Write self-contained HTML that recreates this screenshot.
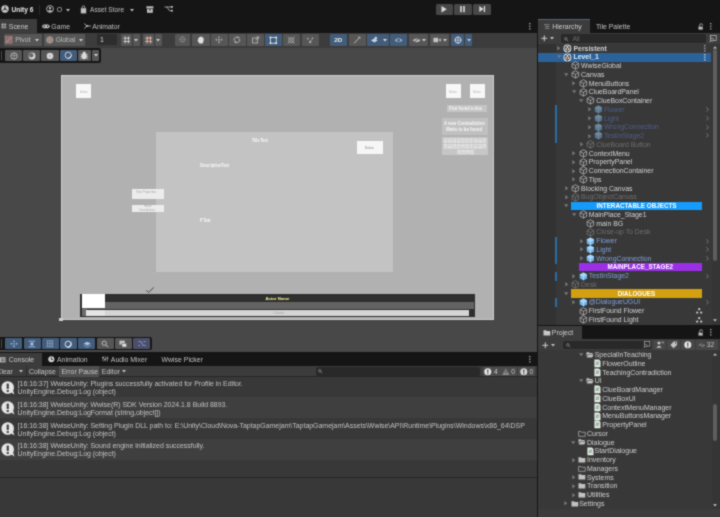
<!DOCTYPE html>
<html><head><meta charset="utf-8"><title>Unity</title>
<style>
html,body{margin:0;padding:0;}
body{width:720px;height:517px;overflow:hidden;background:#383838;position:relative;font-family:"Liberation Sans",sans-serif;}
#root{position:absolute;left:0;top:0;width:720px;height:517px;overflow:hidden;filter:url(#bl);will-change:transform;}
#root div{position:absolute;box-sizing:border-box;}
.t{position:absolute;white-space:nowrap;line-height:10px;height:10px;font-size:6.9px;}
svg{position:absolute;overflow:visible;}
</style></head><body>
<svg width="0" height="0" style="position:absolute"><filter id="bl" x="0" y="0" width="100%" height="100%" color-interpolation-filters="sRGB"><feConvolveMatrix order="3" kernelMatrix="1 2 1 2 10 2 1 2 1" divisor="22" edgeMode="duplicate" preserveAlpha="true"/></filter></svg>
<div id="root">
<div style="left:0px;top:0px;width:720px;height:19.5px;background:#151515;"></div>
<svg style="left:0.5px;top:5px;" width="8" height="8" viewBox="0 0 8 8"><circle cx="4" cy="4" r="3.7" fill="#c9c9c9"/><path d="M4 4 L4 1.1 M4 4 L1.5 5.5 M4 4 L6.5 5.5" stroke="#333" stroke-width="0.9" fill="none"/><circle cx="4" cy="4" r="1" fill="#333"/></svg>
<span class="t" style="left:11.5px;top:4.8px;color:#e6e6e6;font-size:6.6px;font-weight:700;">Unity 6</span>
<div style="left:39.2px;top:4.5px;width:0.7px;height:10.5px;background:#2a2a2a;"></div>
<svg style="left:46px;top:5px;" width="8" height="8" viewBox="0 0 8 8"><circle cx="4" cy="4" r="3.4" fill="none" stroke="#c0c0c0" stroke-width="0.9"/><circle cx="4" cy="3.1" r="1.2" fill="#c0c0c0"/><path d="M1.6 6.2 Q4 3.9 6.4 6.2 Q4 7.8 1.6 6.2Z" fill="#c0c0c0"/></svg>
<span class="t" style="left:56.8px;top:4.8px;color:#c0c0c0;font-size:6.9px;">O</span>
<svg style="left:65.5px;top:8.7px;" width="4" height="2.6" viewBox="0 0 4 2.6"><path d="M0 0 L4 0 L2 2.6 Z" fill="#c0c0c0"/></svg>
<svg style="left:79.5px;top:4.6px;" width="7" height="9" viewBox="0 0 7 9"><path d="M0.8 3.2 H6.2 V8.4 H0.8 Z" fill="#c0c0c0"/><path d="M2.2 3.2 V2.2 A1.3 1.3 0 0 1 4.8 2.2 V3.2" fill="none" stroke="#c0c0c0" stroke-width="0.8"/></svg>
<span class="t" style="left:90px;top:4.8px;color:#c0c0c0;font-size:6.6px;">Asset Store</span>
<svg style="left:129.5px;top:8.7px;" width="4" height="2.6" viewBox="0 0 4 2.6"><path d="M0 0 L4 0 L2 2.6 Z" fill="#c0c0c0"/></svg>
<svg style="left:145.5px;top:5.6px;" width="8" height="8" viewBox="0 0 8 8"><rect x="0.4" y="0.3" width="7" height="2" fill="#c0c0c0"/><path d="M1 2.8 H6.8 V6.8 H1 Z" fill="#c0c0c0"/><rect x="2.8" y="3.4" width="2.2" height="0.9" fill="#191919"/></svg>
<svg style="left:163.5px;top:5.2px;" width="9" height="8" viewBox="0 0 9 8"><g fill="none" stroke="#c0c0c0" stroke-width="0.8"><path d="M0.5 2 H3 L5.4 5.6 H8 M3 2 H8"/></g><rect x="7" y="1" width="1.8" height="1.8" fill="#c0c0c0"/><rect x="7" y="4.8" width="1.8" height="1.8" fill="#c0c0c0"/></svg>
<div style="left:435.5px;top:3.6px;width:17.5px;height:11.6px;background:#474747;border-radius:1.5px;"></div>
<div style="left:454px;top:3.6px;width:17.7px;height:11.6px;background:#474747;border-radius:1.5px;"></div>
<div style="left:473px;top:3.6px;width:17.5px;height:11.6px;background:#474747;border-radius:1.5px;"></div>
<svg style="left:441.3px;top:6.1px;" width="6.6" height="6.6" viewBox="0 0 6.6 6.6"><path d="M0.5 0 L5.8 3.3 L0.5 6.6 Z" fill="#dcdcdc"/></svg>
<svg style="left:460.4px;top:6.3px;" width="5" height="6.4" viewBox="0 0 5 6.4"><rect x="0.2" y="0" width="1.6" height="6.2" fill="#dcdcdc"/><rect x="3.2" y="0" width="1.6" height="6.2" fill="#dcdcdc"/></svg>
<svg style="left:478.8px;top:6.3px;" width="7" height="6.4" viewBox="0 0 7 6.4"><path d="M0.3 0.1 L4.6 3.1 L0.3 6.1 Z" fill="#dcdcdc"/><rect x="4.8" y="0.1" width="1.3" height="6" fill="#dcdcdc"/></svg>
<div style="left:0px;top:19.5px;width:537px;height:13px;background:#151515;"></div>
<div style="left:0px;top:19px;width:37px;height:13.7px;background:#3c3c3c;"></div>
<svg style="left:0.5px;top:23px;" width="6" height="6" viewBox="0 0 6 6"><path d="M0 1.7 H5.5 M0 4.1 H5.5 M1.6 0 V5.8 M4 0 V5.8" stroke="#b8b8b8" stroke-width="0.8" fill="none"/></svg>
<span class="t" style="left:8.8px;top:22px;color:#cfcfcf;font-size:6.9px;">Scene</span>
<svg style="left:41.5px;top:23.8px;" width="8" height="5" viewBox="0 0 8 5"><rect x="0.2" y="0.4" width="7.4" height="3.8" rx="1.9" fill="#c6c6c6"/><circle cx="2.2" cy="2.3" r="0.8" fill="#191919"/><circle cx="5.6" cy="2.3" r="0.8" fill="#191919"/></svg>
<span class="t" style="left:51.3px;top:22px;color:#c0c0c0;font-size:6.9px;">Game</span>
<svg style="left:83.8px;top:23.3px;" width="7" height="6" viewBox="0 0 7 6"><path d="M0.3 0.6 L3 3 L0.3 5.4 M3 3 H6.8" stroke="#c0c0c0" stroke-width="0.9" fill="none"/><circle cx="3" cy="3" r="0.9" fill="#c0c0c0"/></svg>
<span class="t" style="left:92.3px;top:22px;color:#c0c0c0;font-size:6.9px;">Animator</span>
<svg style="left:528.8px;top:22.9px;" width="1.6" height="6.6" viewBox="0 0 1.6 6.6"><g fill="#c4c4c4"><rect x="0.2" y="0" width="1.2" height="1.3"/><rect x="0.2" y="2.6" width="1.2" height="1.3"/><rect x="0.2" y="5.2" width="1.2" height="1.3"/></g></svg>
<div style="left:0px;top:32.5px;width:537px;height:15.2px;background:#3c3c3c;"></div>
<div style="left:4.2px;top:34.2px;width:37.4px;height:11.4px;background:#565656;border-radius:1px;"></div>
<div style="left:43.6px;top:34.2px;width:41.4px;height:11.4px;background:#565656;border-radius:1px;"></div>
<div style="left:97.4px;top:34.4px;width:19.4px;height:11px;background:#2d2d2d;border-radius:1px;"></div>
<div style="left:120.5px;top:34.2px;width:11.7px;height:11.4px;background:#565656;border-radius:1px;"></div>
<div style="left:133.2px;top:34.2px;width:6.8px;height:11.4px;background:#565656;border-radius:1px;"></div>
<div style="left:142.5px;top:34.2px;width:11.5px;height:11.4px;background:#565656;border-radius:1px;"></div>
<div style="left:155px;top:34.2px;width:7px;height:11.4px;background:#565656;border-radius:1px;"></div>
<div style="left:175px;top:34.2px;width:15px;height:11.4px;background:#565656;border-radius:1px;"></div>
<div style="left:192.3px;top:34.2px;width:17.7px;height:11.4px;background:#565656;border-radius:1px;"></div>
<div style="left:210.6px;top:34.2px;width:17.0px;height:11.4px;background:#565656;border-radius:1px;"></div>
<div style="left:228.7px;top:34.2px;width:16.9px;height:11.4px;background:#565656;border-radius:1px;"></div>
<div style="left:247px;top:34.2px;width:16.8px;height:11.4px;background:#565656;border-radius:1px;"></div>
<div style="left:265px;top:34.2px;width:17px;height:11.4px;background:#435c7a;border-radius:1px;"></div>
<div style="left:283.2px;top:34.2px;width:16.8px;height:11.4px;background:#565656;border-radius:1px;"></div>
<div style="left:301.7px;top:34.2px;width:17.1px;height:11.4px;background:#565656;border-radius:1px;"></div>
<div style="left:330px;top:34.2px;width:17.2px;height:11.4px;background:#435c7a;border-radius:1px;"></div>
<div style="left:348.8px;top:34.2px;width:16.8px;height:11.4px;background:#565656;border-radius:1px;"></div>
<div style="left:367.4px;top:34.2px;width:13.2px;height:11.4px;background:#435c7a;border-radius:1px;"></div>
<div style="left:381.2px;top:34.2px;width:7.4px;height:11.4px;background:#435c7a;border-radius:1px;"></div>
<div style="left:389.6px;top:34.2px;width:17.4px;height:11.4px;background:#435c7a;border-radius:1px;"></div>
<div style="left:408.8px;top:34.2px;width:19.2px;height:11.4px;background:#565656;border-radius:1px;"></div>
<div style="left:430px;top:34.2px;width:19.2px;height:11.4px;background:#565656;border-radius:1px;"></div>
<div style="left:451px;top:34.2px;width:13.4px;height:11.4px;background:#435c7a;border-radius:1px;"></div>
<div style="left:465px;top:34.2px;width:7px;height:11.4px;background:#435c7a;border-radius:1px;"></div>
<svg style="left:4.5px;top:35.6px;" width="8" height="8" viewBox="0 0 8 8"><rect x="0.5" y="0.5" width="6.6" height="6.6" fill="#8a6f6f" stroke="#b88" stroke-width="0.5"/><path d="M1 6.6 L6.6 1" stroke="#d99" stroke-width="0.8"/></svg>
<span class="t" style="left:15.2px;top:35px;color:#bdbdbd;font-size:6.9px;">Pivot</span>
<svg style="left:35px;top:39.0px;" width="4" height="2.6" viewBox="0 0 4 2.6"><path d="M0 0 L4 0 L2 2.6 Z" fill="#d0d0d0"/></svg>
<svg style="left:46px;top:35.8px;" width="8" height="8" viewBox="0 0 8 8"><circle cx="3.8" cy="3.9" r="3.2" fill="#8d7a72" stroke="#c9b8b0" stroke-width="0.6"/><path d="M0.8 3.9 H6.8 M3.8 0.8 V7" stroke="#c9b8b0" stroke-width="0.5"/></svg>
<span class="t" style="left:55.4px;top:35px;color:#bdbdbd;font-size:6.9px;">Global</span>
<svg style="left:78.6px;top:39.0px;" width="4" height="2.6" viewBox="0 0 4 2.6"><path d="M0 0 L4 0 L2 2.6 Z" fill="#d0d0d0"/></svg>
<span class="t" style="left:100px;top:35px;color:#d6d6d6;font-size:6.9px;">1</span>
<svg style="left:123.2px;top:36px;" width="8" height="8" viewBox="0 0 8 8"><path d="M0.3 2.2 H7.2 M0.3 5.4 H7.2 M2.2 0.3 V7.4 M5.4 0.3 V7.4" stroke="#e4e4e4" stroke-width="0.8" fill="none"/></svg>
<svg style="left:134px;top:39.0px;" width="4" height="2.6" viewBox="0 0 4 2.6"><path d="M0 0 L4 0 L2 2.6 Z" fill="#d0d0d0"/></svg>
<svg style="left:145.2px;top:36px;" width="8" height="8" viewBox="0 0 8 8"><path d="M0.3 2.2 H7.2 M0.3 5.4 H7.2 M2.2 0.3 V7.4 M5.4 0.3 V7.4" stroke="#e4e4e4" stroke-width="0.8" fill="none"/><path d="M2.2 2.2 H5.4 V5.4 H2.2Z" stroke="#e58a6a" stroke-width="0.9" fill="none"/></svg>
<svg style="left:156px;top:39.0px;" width="4" height="2.6" viewBox="0 0 4 2.6"><path d="M0 0 L4 0 L2 2.6 Z" fill="#d0d0d0"/></svg>
<svg style="left:178.5px;top:36.4px;" width="7" height="7" viewBox="0 0 7 7"><circle cx="3.4" cy="3.4" r="2.6" fill="none" stroke="#8c8c8c" stroke-width="0.8"/><path d="M3.4 0 V6.8 M0 3.4 H6.8" stroke="#8c8c8c" stroke-width="0.5"/></svg>
<svg style="left:197.3px;top:35.9px;" width="8" height="8" viewBox="0 0 8 8"><path d="M1.2 4 V2 H2.2 V1 H3.3 V0.6 H4.4 V1 H5.5 V1.8 H6.6 V5 L5.6 7.4 H2.4 L0.4 4.6 Z" fill="#e0e0e0"/></svg>
<svg style="left:215px;top:36.2px;" width="8" height="8" viewBox="0 0 8 8"><path d="M4 0.2 L5.2 1.8 H2.8 Z M4 7.4 L5.2 5.8 H2.8 Z M0.3 3.8 L1.9 2.6 V5 Z M7.7 3.8 L6.1 2.6 V5 Z" fill="#bdbdbd"/><rect x="3.2" y="3" width="1.6" height="1.6" fill="#bdbdbd"/></svg>
<svg style="left:233.3px;top:36.1px;" width="8" height="8" viewBox="0 0 8 8"><path d="M1.2 4.6 A2.8 2.8 0 0 1 5.6 1.6 M6.6 3 A2.8 2.8 0 0 1 2.2 6" fill="none" stroke="#bdbdbd" stroke-width="0.9"/><path d="M4.8 0.4 L6.8 1.8 L4.8 2.8Z M3 7.2 L1 5.8 L3 4.8Z" fill="#bdbdbd"/></svg>
<svg style="left:251.6px;top:36.2px;" width="8" height="8" viewBox="0 0 8 8"><rect x="0.6" y="2" width="5" height="5" fill="none" stroke="#bdbdbd" stroke-width="0.8"/><path d="M3.2 4.4 L6.6 1 M4.6 0.8 H6.8 V3" stroke="#bdbdbd" stroke-width="0.8" fill="none"/></svg>
<svg style="left:269.3px;top:35.7px;" width="9" height="9" viewBox="0 0 9 9"><rect x="1.4" y="1.4" width="5.8" height="5.8" fill="none" stroke="#e8eef6" stroke-width="0.8"/><g fill="#f4f8ff"><circle cx="1.4" cy="1.4" r="0.9"/><circle cx="7.2" cy="1.4" r="0.9"/><circle cx="1.4" cy="7.2" r="0.9"/><circle cx="7.2" cy="7.2" r="0.9"/></g></svg>
<svg style="left:287.4px;top:35.9px;" width="9" height="9" viewBox="0 0 9 9"><circle cx="4.2" cy="4.2" r="2.5" fill="none" stroke="#bdbdbd" stroke-width="0.7"/><path d="M0.6 7.6 L7.8 0.6 M0.8 0.8 L7.6 7.6" stroke="#bdbdbd" stroke-width="0.6"/></svg>
<svg style="left:306px;top:36px;" width="9" height="9" viewBox="0 0 9 9"><path d="M1 1.4 L3.2 3 L1.4 3.6Z M6.4 1 L7.4 3.2 L5.4 3Z" fill="#bdbdbd"/><path d="M3.4 4.6 L5.8 6 L3.4 7.6Z" fill="#bdbdbd"/><path d="M5 3.6 V5" stroke="#bdbdbd" stroke-width="0.7"/></svg>
<span class="t" style="left:334.2px;top:35px;color:#e8eef6;font-size:6.2px;font-weight:700;">2D</span>
<svg style="left:352.6px;top:36px;" width="9" height="9" viewBox="0 0 9 9"><path d="M1 7.4 L6.6 1.4" stroke="#bdbdbd" stroke-width="1"/><path d="M5.4 0.6 L7.6 2.4" stroke="#bdbdbd" stroke-width="1.2"/></svg>
<svg style="left:369.6px;top:36.2px;" width="9" height="8" viewBox="0 0 9 8"><path d="M1 4.2 L4.4 2.6 L7.8 4.2 L4.4 6.6 Z" fill="#c9d8ea"/><circle cx="5.8" cy="2" r="1.3" fill="#c9d8ea"/></svg>
<svg style="left:383px;top:39.0px;" width="4" height="2.6" viewBox="0 0 4 2.6"><path d="M0 0 L4 0 L2 2.6 Z" fill="#d4e0ee"/></svg>
<svg style="left:393.6px;top:36.6px;" width="10" height="7" viewBox="0 0 10 7"><path d="M0.6 3.3 Q4.6 -0.8 8.6 3.3 Q4.6 7.4 0.6 3.3Z" fill="#9fb6d0"/><circle cx="4.6" cy="3.3" r="1.5" fill="#46607c"/></svg>
<svg style="left:412px;top:36.6px;" width="10" height="7" viewBox="0 0 10 7"><path d="M0.6 3.3 Q4.6 -0.4 8.6 3.3 Q4.6 7 0.6 3.3Z" fill="#bdbdbd"/><path d="M1 5.8 L8 0.6" stroke="#585858" stroke-width="0.9"/></svg>
<svg style="left:422.2px;top:39.0px;" width="4" height="2.6" viewBox="0 0 4 2.6"><path d="M0 0 L4 0 L2 2.6 Z" fill="#d0d0d0"/></svg>
<svg style="left:433px;top:36.9px;" width="9" height="7" viewBox="0 0 9 7"><rect x="0.4" y="0.8" width="4.8" height="4.4" fill="#c4c4c4"/><path d="M5.6 3 L7.8 1.2 V4.8 Z" fill="#c4c4c4"/></svg>
<svg style="left:443px;top:39.0px;" width="4" height="2.6" viewBox="0 0 4 2.6"><path d="M0 0 L4 0 L2 2.6 Z" fill="#d0d0d0"/></svg>
<svg style="left:453.7px;top:35.8px;" width="9" height="9" viewBox="0 0 9 9"><circle cx="4" cy="4.1" r="3" fill="none" stroke="#e8eef6" stroke-width="0.8"/><path d="M4 0.2 V8 M0.2 4.1 H7.8" stroke="#e8eef6" stroke-width="0.6"/></svg>
<svg style="left:466.6px;top:39.0px;" width="4" height="2.6" viewBox="0 0 4 2.6"><path d="M0 0 L4 0 L2 2.6 Z" fill="#b8d0ee"/></svg>
<div style="left:0px;top:47.7px;width:537px;height:305px;background:#484848;"></div>
<div style="left:60.6px;top:74.8px;width:433.8px;height:244.8px;background:#b1b1b1;border:0.8px solid #cdcdcd;"></div>
<div style="left:155.6px;top:132px;width:237.8px;height:140px;background:#c3c3c3;"></div>
<div style="left:75.8px;top:84px;width:15.2px;height:14.2px;background:#f8f8f8;"></div>
<div style="left:445.5px;top:84px;width:15.2px;height:14.2px;background:#f8f8f8;"></div>
<div style="left:469.5px;top:84px;width:15.2px;height:14.2px;background:#f8f8f8;"></div>
<span class="t" style="left:79.6px;top:86.6px;color:#b4b4b4;font-size:3.4px;transform:scaleX(0.8);transform-origin:0 50%;">Button</span>
<span class="t" style="left:449.4px;top:86.6px;color:#b4b4b4;font-size:3.4px;transform:scaleX(0.8);transform-origin:0 50%;">Button</span>
<span class="t" style="left:473.4px;top:86.6px;color:#b4b4b4;font-size:3.4px;transform:scaleX(0.8);transform-origin:0 50%;">Button</span>
<div style="left:356.6px;top:141px;width:26px;height:12.8px;background:#f6f6f6;"></div>
<span class="t" style="left:365px;top:142.6px;color:#8a8a8a;font-size:3.6px;transform:scaleX(0.85);transform-origin:0 50%;">Button</span>
<div style="left:447.2px;top:104.6px;width:39.8px;height:7px;background:#c4c4c4;"></div>
<span class="t" style="left:449px;top:103px;color:#f4f4f4;font-size:5.2px;font-weight:700;transform:scaleX(0.76);transform-origin:0 50%;">First found a clue</span>
<div style="left:442.2px;top:117.8px;width:45.4px;height:16.8px;background:#c0c0c0;"></div>
<span class="t" style="left:443.6px;top:117.6px;color:#f6f6f6;font-size:5.4px;font-weight:700;transform:scaleX(0.78);transform-origin:0 50%;">A new Contradiction</span>
<span class="t" style="left:446.4px;top:124px;color:#f6f6f6;font-size:5.4px;font-weight:700;transform:scaleX(0.8);transform-origin:0 50%;">Waits to be found</span>
<div style="left:442.2px;top:137.2px;width:45.4px;height:18px;background:#c6c6c6;"></div>
<svg style="left:0px;top:0px;" width="720" height="517" viewBox="0 0 720 517"><rect x="443.8" y="138.5" width="3.6" height="4.3" fill="#e6e6e6"/><rect x="444.2" y="140.18" width="2.8" height="0.55" fill="#c6c6c6" opacity="0.75"/><rect x="444.2" y="139.76" width="2.8" height="0.55" fill="#c6c6c6" opacity="0.75"/><rect x="445.77" y="139.0" width="0.5" height="3.3" fill="#c6c6c6" opacity="0.6"/><rect x="448.1" y="138.5" width="3.6" height="4.3" fill="#e6e6e6"/><rect x="448.5" y="139.57" width="2.8" height="0.55" fill="#c6c6c6" opacity="0.75"/><rect x="448.5" y="140.69" width="2.8" height="0.55" fill="#c6c6c6" opacity="0.75"/><rect x="449.56" y="139.0" width="0.5" height="3.3" fill="#c6c6c6" opacity="0.6"/><rect x="452.4" y="138.5" width="3.6" height="4.3" fill="#e6e6e6"/><rect x="452.8" y="139.54" width="2.8" height="0.55" fill="#c6c6c6" opacity="0.75"/><rect x="452.8" y="140.62" width="2.8" height="0.55" fill="#c6c6c6" opacity="0.75"/><rect x="453.27" y="139.0" width="0.5" height="3.3" fill="#c6c6c6" opacity="0.6"/><rect x="456.7" y="138.5" width="3.6" height="4.3" fill="#e6e6e6"/><rect x="457.1" y="140.44" width="2.8" height="0.55" fill="#c6c6c6" opacity="0.75"/><rect x="457.1" y="139.57" width="2.8" height="0.55" fill="#c6c6c6" opacity="0.75"/><rect x="457.66" y="139.0" width="0.5" height="3.3" fill="#c6c6c6" opacity="0.6"/><rect x="461.0" y="138.5" width="3.6" height="4.3" fill="#e6e6e6"/><rect x="461.4" y="140.42" width="2.8" height="0.55" fill="#c6c6c6" opacity="0.75"/><rect x="461.4" y="141.38" width="2.8" height="0.55" fill="#c6c6c6" opacity="0.75"/><rect x="462.02" y="139.0" width="0.5" height="3.3" fill="#c6c6c6" opacity="0.6"/><rect x="465.3" y="138.5" width="3.6" height="4.3" fill="#e6e6e6"/><rect x="465.7" y="139.94" width="2.8" height="0.55" fill="#c6c6c6" opacity="0.75"/><rect x="465.7" y="140.91" width="2.8" height="0.55" fill="#c6c6c6" opacity="0.75"/><rect x="467.81" y="139.0" width="0.5" height="3.3" fill="#c6c6c6" opacity="0.6"/><rect x="469.6" y="138.5" width="3.6" height="4.3" fill="#e6e6e6"/><rect x="470.0" y="140.79" width="2.8" height="0.55" fill="#c6c6c6" opacity="0.75"/><rect x="470.0" y="140.35" width="2.8" height="0.55" fill="#c6c6c6" opacity="0.75"/><rect x="472.16" y="139.0" width="0.5" height="3.3" fill="#c6c6c6" opacity="0.6"/><rect x="473.9" y="138.5" width="3.6" height="4.3" fill="#e6e6e6"/><rect x="474.3" y="139.51" width="2.8" height="0.55" fill="#c6c6c6" opacity="0.75"/><rect x="474.3" y="141.46" width="2.8" height="0.55" fill="#c6c6c6" opacity="0.75"/><rect x="475.22" y="139.0" width="0.5" height="3.3" fill="#c6c6c6" opacity="0.6"/><rect x="478.2" y="138.5" width="3.6" height="4.3" fill="#e6e6e6"/><rect x="478.6" y="139.75" width="2.8" height="0.55" fill="#c6c6c6" opacity="0.75"/><rect x="478.6" y="139.68" width="2.8" height="0.55" fill="#c6c6c6" opacity="0.75"/><rect x="479.56" y="139.0" width="0.5" height="3.3" fill="#c6c6c6" opacity="0.6"/><rect x="482.5" y="138.5" width="3.6" height="4.3" fill="#e6e6e6"/><rect x="482.9" y="141.36" width="2.8" height="0.55" fill="#c6c6c6" opacity="0.75"/><rect x="482.9" y="139.83" width="2.8" height="0.55" fill="#c6c6c6" opacity="0.75"/><rect x="484.35" y="139.0" width="0.5" height="3.3" fill="#c6c6c6" opacity="0.6"/><rect x="443.8" y="144.2" width="3.6" height="4.3" fill="#e6e6e6"/><rect x="444.2" y="146.63" width="2.8" height="0.55" fill="#c6c6c6" opacity="0.75"/><rect x="444.2" y="145.99" width="2.8" height="0.55" fill="#c6c6c6" opacity="0.75"/><rect x="445.59" y="144.7" width="0.5" height="3.3" fill="#c6c6c6" opacity="0.6"/><rect x="448.1" y="144.2" width="3.6" height="4.3" fill="#e6e6e6"/><rect x="448.5" y="145.25" width="2.8" height="0.55" fill="#c6c6c6" opacity="0.75"/><rect x="448.5" y="145.24" width="2.8" height="0.55" fill="#c6c6c6" opacity="0.75"/><rect x="449.27" y="144.7" width="0.5" height="3.3" fill="#c6c6c6" opacity="0.6"/><rect x="452.4" y="144.2" width="3.6" height="4.3" fill="#e6e6e6"/><rect x="452.8" y="146.73" width="2.8" height="0.55" fill="#c6c6c6" opacity="0.75"/><rect x="452.8" y="146.13" width="2.8" height="0.55" fill="#c6c6c6" opacity="0.75"/><rect x="453.77" y="144.7" width="0.5" height="3.3" fill="#c6c6c6" opacity="0.6"/><rect x="456.7" y="144.2" width="3.6" height="4.3" fill="#e6e6e6"/><rect x="457.1" y="146.51" width="2.8" height="0.55" fill="#c6c6c6" opacity="0.75"/><rect x="457.1" y="146.19" width="2.8" height="0.55" fill="#c6c6c6" opacity="0.75"/><rect x="458.04" y="144.7" width="0.5" height="3.3" fill="#c6c6c6" opacity="0.6"/><rect x="461.0" y="144.2" width="3.6" height="4.3" fill="#e6e6e6"/><rect x="461.4" y="147.01" width="2.8" height="0.55" fill="#c6c6c6" opacity="0.75"/><rect x="461.4" y="146.78" width="2.8" height="0.55" fill="#c6c6c6" opacity="0.75"/><rect x="462.24" y="144.7" width="0.5" height="3.3" fill="#c6c6c6" opacity="0.6"/><rect x="465.3" y="144.2" width="3.6" height="4.3" fill="#e6e6e6"/><rect x="465.7" y="146.48" width="2.8" height="0.55" fill="#c6c6c6" opacity="0.75"/><rect x="465.7" y="146.36" width="2.8" height="0.55" fill="#c6c6c6" opacity="0.75"/><rect x="467.68" y="144.7" width="0.5" height="3.3" fill="#c6c6c6" opacity="0.6"/><rect x="469.6" y="144.2" width="3.6" height="4.3" fill="#e6e6e6"/><rect x="470.0" y="146.85" width="2.8" height="0.55" fill="#c6c6c6" opacity="0.75"/><rect x="470.0" y="145.79" width="2.8" height="0.55" fill="#c6c6c6" opacity="0.75"/><rect x="472.16" y="144.7" width="0.5" height="3.3" fill="#c6c6c6" opacity="0.6"/><rect x="473.9" y="144.2" width="3.6" height="4.3" fill="#e6e6e6"/><rect x="474.3" y="145.38" width="2.8" height="0.55" fill="#c6c6c6" opacity="0.75"/><rect x="474.3" y="146.1" width="2.8" height="0.55" fill="#c6c6c6" opacity="0.75"/><rect x="476.06" y="144.7" width="0.5" height="3.3" fill="#c6c6c6" opacity="0.6"/><rect x="478.2" y="144.2" width="3.6" height="4.3" fill="#e6e6e6"/><rect x="478.6" y="145.46" width="2.8" height="0.55" fill="#c6c6c6" opacity="0.75"/><rect x="478.6" y="146.27" width="2.8" height="0.55" fill="#c6c6c6" opacity="0.75"/><rect x="479.07" y="144.7" width="0.5" height="3.3" fill="#c6c6c6" opacity="0.6"/><rect x="482.5" y="144.2" width="3.6" height="4.3" fill="#e6e6e6"/><rect x="482.9" y="146.7" width="2.8" height="0.55" fill="#c6c6c6" opacity="0.75"/><rect x="482.9" y="146.93" width="2.8" height="0.55" fill="#c6c6c6" opacity="0.75"/><rect x="484.33" y="144.7" width="0.5" height="3.3" fill="#c6c6c6" opacity="0.6"/><rect x="457.4" y="149.9" width="3.6" height="4.3" fill="#e6e6e6"/><rect x="457.8" y="152.9" width="2.8" height="0.55" fill="#c6c6c6" opacity="0.75"/><rect x="457.8" y="151.55" width="2.8" height="0.55" fill="#c6c6c6" opacity="0.75"/><rect x="459.45" y="150.4" width="0.5" height="3.3" fill="#c6c6c6" opacity="0.6"/><rect x="461.7" y="149.9" width="3.6" height="4.3" fill="#e6e6e6"/><rect x="462.1" y="152.23" width="2.8" height="0.55" fill="#c6c6c6" opacity="0.75"/><rect x="462.1" y="152.19" width="2.8" height="0.55" fill="#c6c6c6" opacity="0.75"/><rect x="463.32" y="150.4" width="0.5" height="3.3" fill="#c6c6c6" opacity="0.6"/><rect x="466.0" y="149.9" width="3.6" height="4.3" fill="#e6e6e6"/><rect x="466.4" y="152.82" width="2.8" height="0.55" fill="#c6c6c6" opacity="0.75"/><rect x="466.4" y="153.07" width="2.8" height="0.55" fill="#c6c6c6" opacity="0.75"/><rect x="467.65" y="150.4" width="0.5" height="3.3" fill="#c6c6c6" opacity="0.6"/><rect x="470.3" y="149.9" width="3.6" height="4.3" fill="#e6e6e6"/><rect x="470.7" y="152.39" width="2.8" height="0.55" fill="#c6c6c6" opacity="0.75"/><rect x="470.7" y="150.95" width="2.8" height="0.55" fill="#c6c6c6" opacity="0.75"/><rect x="472.36" y="150.4" width="0.5" height="3.3" fill="#c6c6c6" opacity="0.6"/></svg>
<span class="t" style="left:251.8px;top:134.6px;color:#f8f8f8;font-size:5.2px;font-weight:700;transform:scaleX(0.7);transform-origin:0 50%;">Title Text</span>
<span class="t" style="left:200.4px;top:159.8px;color:#f8f8f8;font-size:5.4px;font-weight:700;transform:scaleX(0.72);transform-origin:0 50%;">DescriptionText</span>
<span class="t" style="left:199.8px;top:215px;color:#f8f8f8;font-size:5.2px;font-weight:700;transform:scaleX(0.7);transform-origin:0 50%;">P Text</span>
<div style="left:132px;top:189px;width:32px;height:9.8px;background:#ececec;"></div>
<span class="t" style="left:136.4px;top:186.8px;color:#a8a8a8;font-size:3.4px;transform:scaleX(0.85);transform-origin:0 50%;">View Properties</span>
<div style="left:132px;top:204.6px;width:32px;height:7.8px;background:#ececec;"></div>
<span class="t" style="left:144px;top:201.4px;color:#a8a8a8;font-size:3px;transform:scaleX(0.85);transform-origin:0 50%;">Relate</span>
<span class="t" style="left:138.8px;top:204.6px;color:#a8a8a8;font-size:3px;transform:scaleX(0.85);transform-origin:0 50%;">Contradictions</span>
<svg style="left:146.2px;top:287.4px;" width="9" height="7" viewBox="0 0 9 7"><path d="M0.4 3.2 L2.6 5.6 L7.6 0.4" fill="none" stroke="#3c3c3c" stroke-width="0.9"/></svg>
<div style="left:80.2px;top:294.4px;width:394.8px;height:23px;background:#2e2e2e;"></div>
<div style="left:81.6px;top:295.6px;width:392px;height:6.6px;background:#2f2f2f;"></div>
<div style="left:81.6px;top:302.2px;width:392px;height:6.4px;background:#636363;"></div>
<div style="left:81.6px;top:309.4px;width:5px;height:6.6px;background:#6c6c6c;"></div>
<div style="left:86px;top:309.8px;width:383px;height:6px;background:#d4d4d4;"></div>
<div style="left:81.8px;top:293.6px;width:22.8px;height:14.2px;background:#ffffff;"></div>
<div style="left:86px;top:309.8px;width:18.6px;height:6px;background:#e4e4e4;"></div>
<span class="t" style="left:265.4px;top:294.4px;color:#f4f690;font-size:4.3px;font-weight:700;">Actor Name</span>
<span class="t" style="left:273.4px;top:307.9px;color:#a4a4a4;font-size:3.6px;">Choice</span>
<div style="left:59.4px;top:318px;width:3.6px;height:3.4px;background:#cfcfcf;"></div>
<div style="left:-2px;top:48px;width:103px;height:14.6px;background:#161616;border-radius:2px;"></div>
<div style="left:1.2px;top:50.6px;width:1px;height:9px;background:#4a4a4a;"></div>
<div style="left:5px;top:50px;width:17px;height:10.8px;background:#565656;border-radius:1px;"></div>
<div style="left:23px;top:50px;width:17px;height:10.8px;background:#565656;border-radius:1px;"></div>
<div style="left:41px;top:50px;width:17.6px;height:10.8px;background:#565656;border-radius:1px;"></div>
<div style="left:59.6px;top:50px;width:17.4px;height:10.8px;background:#435c7a;border-radius:1px;"></div>
<div style="left:78px;top:50px;width:13px;height:10.8px;background:#565656;border-radius:1px;"></div>
<div style="left:92px;top:50px;width:7.4px;height:10.8px;background:#565656;border-radius:1px;"></div>
<svg style="left:9.6px;top:51.6px;" width="8" height="8" viewBox="0 0 8 8"><circle cx="4" cy="4" r="3.2" fill="none" stroke="#c9c9c9" stroke-width="0.8"/><path d="M1.4 3 Q4 4.8 6.6 3 M4 0.8 V7.2" stroke="#c9c9c9" stroke-width="0.5" fill="none"/></svg>
<svg style="left:27.6px;top:51.6px;" width="8" height="8" viewBox="0 0 8 8"><circle cx="4" cy="4" r="3.4" fill="#dadada"/><circle cx="3.2" cy="3.2" r="2.3" fill="#6a6a6a"/></svg>
<svg style="left:45.8px;top:51.6px;" width="8" height="8" viewBox="0 0 8 8"><circle cx="4" cy="4" r="3.3" fill="#d4d4d4"/><circle cx="4" cy="4" r="1" fill="#bbb"/></svg>
<svg style="left:64.2px;top:51.4px;" width="9" height="9" viewBox="0 0 9 9"><circle cx="4.2" cy="4.2" r="3.1" fill="none" stroke="#dfe8f4" stroke-width="0.8"/><path d="M7.2 3 A3.3 3.3 0 0 1 2.2 7 A3.9 3.9 0 0 0 7.2 3Z" fill="#f4f8fd"/></svg>
<svg style="left:80.4px;top:51px;" width="9" height="10" viewBox="0 0 9 10"><ellipse cx="4.2" cy="5.2" rx="2.6" ry="3.1" fill="#dcdcdc"/><circle cx="4.2" cy="1.9" r="1.5" fill="#dcdcdc"/><path d="M0.4 3.2 L2 4.2 M0.2 5.6 H1.8 M0.4 8 L2 7 M8 3.2 L6.4 4.2 M8.2 5.6 H6.6 M8 8 L6.4 7" stroke="#dcdcdc" stroke-width="0.7"/></svg>
<svg style="left:93.8px;top:54.4px;" width="4" height="2.6" viewBox="0 0 4 2.6"><path d="M0 0 L4 0 L2 2.6 Z" fill="#d6d6d6"/></svg>
<div style="left:-2px;top:336.8px;width:153.6px;height:13.4px;background:#161616;border-radius:2px;"></div>
<div style="left:1.2px;top:339.2px;width:0.9px;height:8.6px;background:#4a4a4a;"></div>
<div style="left:5.3px;top:338.4px;width:17.2px;height:10.4px;background:#435c7a;border-radius:1px;"></div>
<div style="left:23.6px;top:338.4px;width:17.3px;height:10.4px;background:#435c7a;border-radius:1px;"></div>
<div style="left:42px;top:338.4px;width:16.9px;height:10.4px;background:#435c7a;border-radius:1px;"></div>
<div style="left:60px;top:338.4px;width:17.2px;height:10.4px;background:#435c7a;border-radius:1px;"></div>
<div style="left:78.4px;top:338.4px;width:16.8px;height:10.4px;background:#435c7a;border-radius:1px;"></div>
<div style="left:96.8px;top:338.4px;width:16.8px;height:10.4px;background:#565656;border-radius:1px;"></div>
<div style="left:114.8px;top:338.4px;width:16.8px;height:10.4px;background:#565656;border-radius:1px;"></div>
<div style="left:133px;top:338.4px;width:17px;height:10.4px;background:#4b4f69;border-radius:1px;"></div>
<svg style="left:10px;top:339.6px;" width="8" height="8" viewBox="0 0 8 8"><path d="M4 0.2 L5.2 1.8 H2.8 Z M4 7.4 L5.2 5.8 H2.8 Z M0.3 3.8 L1.9 2.6 V5 Z M7.7 3.8 L6.1 2.6 V5 Z" fill="#a9c6ea"/><rect x="3.3" y="3.1" width="1.4" height="1.4" fill="#a9c6ea"/></svg>
<svg style="left:28.2px;top:339.8px;" width="8" height="8" viewBox="0 0 8 8"><path d="M0.6 1.2 H7.2 M0.6 6.8 H7.2" stroke="#a9c6ea" stroke-width="0.8"/><rect x="2.4" y="2.6" width="3" height="2.8" fill="#a9c6ea"/></svg>
<svg style="left:46.4px;top:339.8px;" width="8" height="8" viewBox="0 0 8 8"><path d="M0.4 1 H7.4 M0.4 3.8 H7.4 M0.4 6.6 H7.4 M1.6 0.4 V7.2 M4 0.4 V7.2 M6.4 0.4 V7.2" stroke="#a9c6ea" stroke-width="0.5" fill="none"/></svg>
<svg style="left:64.3px;top:339.5px;" width="9" height="9" viewBox="0 0 9 9"><circle cx="4.2" cy="4.2" r="3.1" fill="none" stroke="#e6eef8" stroke-width="0.9"/><path d="M6.2 1.6 A3.2 3.2 0 0 1 2 6.6 A3.6 3.6 0 0 0 6.2 1.6Z" fill="#e6eef8"/></svg>
<svg style="left:82.6px;top:340px;" width="9" height="8" viewBox="0 0 9 8"><path d="M0.6 3.6 L4.2 1.8 L7.8 3.6 L4.2 5.6Z" fill="#a9c6ea"/><path d="M0.6 5.2 L4.2 7.2 L7.8 5.2" fill="none" stroke="#a9c6ea" stroke-width="0.6"/></svg>
<svg style="left:101.4px;top:339.8px;" width="8" height="8" viewBox="0 0 8 8"><circle cx="3.2" cy="3.2" r="2.2" fill="none" stroke="#c4c4c4" stroke-width="0.9"/><path d="M4.8 4.8 L7.2 7.2" stroke="#c4c4c4" stroke-width="1"/></svg>
<svg style="left:119.4px;top:339.8px;" width="9" height="8" viewBox="0 0 9 8"><rect x="0.4" y="0.6" width="5.4" height="4" fill="#c4c4c4"/><rect x="3" y="3.4" width="4.6" height="3.6" fill="#e0e0e0" stroke="#585858" stroke-width="0.5"/></svg>
<svg style="left:137.6px;top:340.2px;" width="9" height="8" viewBox="0 0 9 8"><path d="M0.4 1.6 H3 L5 5.4 H7.8 M0.4 5.4 H2.2 M5.4 1.6 H7.8" stroke="#9a9ff0" stroke-width="0.8" fill="none"/></svg>
<div style="left:0px;top:351.8px;width:537px;height:13.9px;background:#151515;"></div>
<div style="left:0px;top:352.8px;width:42.4px;height:13px;background:#3c3c3c;"></div>
<svg style="left:0.2px;top:356.6px;" width="6" height="6" viewBox="0 0 6 6"><rect x="0" y="0.2" width="5.6" height="5.2" fill="#b4b4b4"/><path d="M1 2 H4.8 M1 3.7 H4.8" stroke="#3c3c3c" stroke-width="0.7"/></svg>
<span class="t" style="left:8.8px;top:355px;color:#d0d0d0;font-size:6.9px;">Console</span>
<svg style="left:48.2px;top:355.8px;" width="7" height="7" viewBox="0 0 7 7"><circle cx="3.3" cy="3.3" r="3" fill="#d6d6d6"/><path d="M3.3 1.2 V3.5 H5" stroke="#191919" stroke-width="0.8" fill="none"/></svg>
<span class="t" style="left:57px;top:355px;color:#c0c0c0;font-size:6.9px;">Animation</span>
<svg style="left:101.6px;top:356.4px;" width="8" height="6" viewBox="0 0 8 6"><path d="M1 0.4 V5.4 M3.2 0.4 V5.4 M5.4 0.4 V5.4" stroke="#c0c0c0" stroke-width="0.6"/><rect x="0.2" y="1" width="1.6" height="1.2" fill="#c0c0c0"/><rect x="2.4" y="3" width="1.6" height="1.2" fill="#c0c0c0"/><rect x="4.6" y="1.6" width="1.6" height="1.2" fill="#c0c0c0"/></svg>
<span class="t" style="left:110.8px;top:355px;color:#c0c0c0;font-size:6.9px;">Audio Mixer</span>
<span class="t" style="left:161.6px;top:355px;color:#c0c0c0;font-size:6.9px;">Wwise Picker</span>
<svg style="left:528.8px;top:355.9px;" width="1.6" height="6.6" viewBox="0 0 1.6 6.6"><g fill="#c4c4c4"><rect x="0.2" y="0" width="1.2" height="1.3"/><rect x="0.2" y="2.6" width="1.2" height="1.3"/><rect x="0.2" y="5.2" width="1.2" height="1.3"/></g></svg>
<div style="left:0px;top:365.7px;width:537px;height:11.2px;background:#3c3c3c;border-bottom:0.6px solid #262626;"></div>
<span class="t" style="left:-3.6px;top:366.5px;color:#c4c4c4;font-size:6.9px;">Clear</span>
<svg style="left:18.8px;top:370.4px;" width="4" height="2.6" viewBox="0 0 4 2.6"><path d="M0 0 L4 0 L2 2.6 Z" fill="#c4c4c4"/></svg>
<div style="left:26.2px;top:366.2px;width:0.6px;height:10.2px;background:#2a2a2a;"></div>
<span class="t" style="left:29px;top:366.5px;color:#c4c4c4;font-size:6.9px;">Collapse</span>
<div style="left:59.4px;top:366.2px;width:39.6px;height:10.4px;background:#505050;"></div>
<span class="t" style="left:61.4px;top:366.5px;color:#c4c4c4;font-size:6.9px;">Error Pause</span>
<span class="t" style="left:101.8px;top:366.5px;color:#c4c4c4;font-size:6.9px;">Editor</span>
<svg style="left:121.6px;top:370.4px;" width="4" height="2.6" viewBox="0 0 4 2.6"><path d="M0 0 L4 0 L2 2.6 Z" fill="#c4c4c4"/></svg>
<div style="left:315.8px;top:367px;width:164.4px;height:8.8px;background:#292929;border-radius:2px;"></div>
<svg style="left:318.4px;top:369.2px;" width="5" height="5" viewBox="0 0 5 5"><circle cx="1.8" cy="1.8" r="1.2" fill="none" stroke="#aaa" stroke-width="0.6"/><path d="M2.8 2.8 L4.2 4.2" stroke="#aaa" stroke-width="0.6"/></svg>
<div style="left:482.8px;top:366.6px;width:17.2px;height:9.8px;background:#4c4c4c;"></div>
<div style="left:500.2px;top:366.6px;width:17.2px;height:9.8px;background:#4c4c4c;"></div>
<div style="left:518px;top:366.6px;width:17.2px;height:9.8px;background:#4c4c4c;"></div>
<svg style="left:484.4px;top:367.6px;" width="8" height="8" viewBox="0 0 8 8"><circle cx="3.8" cy="3.8" r="3.5" fill="#e8e8e8"/><rect x="3.2" y="1.6" width="1.2" height="3" fill="#444"/><rect x="3.2" y="5.2" width="1.2" height="1.1" fill="#444"/></svg>
<span class="t" style="left:494px;top:366.5px;color:#d0d0d0;font-size:6.6px;">4</span>
<svg style="left:502px;top:367.8px;" width="8" height="8" viewBox="0 0 8 8"><path d="M3.8 0.6 L7.4 7 H0.2 Z" fill="#8a8a8a"/><rect x="3.3" y="2.8" width="1" height="2.4" fill="#4c4c4c"/></svg>
<span class="t" style="left:511.2px;top:366.5px;color:#c4c4c4;font-size:6.6px;">0</span>
<svg style="left:520px;top:367.6px;" width="8" height="8" viewBox="0 0 8 8"><circle cx="3.8" cy="3.8" r="3.5" fill="#d8d8d8"/><rect x="3.2" y="1.6" width="1.2" height="3" fill="#444"/><rect x="3.2" y="5.2" width="1.2" height="1.1" fill="#444"/></svg>
<span class="t" style="left:529.4px;top:366.5px;color:#c4c4c4;font-size:6.6px;">0</span>
<div style="left:0px;top:376.6px;width:537px;height:20.78px;background:#383838;"></div>
<svg style="left:1.2px;top:380.65px;" width="15" height="15" viewBox="0 0 15 15"><circle cx="6.7" cy="6.5" r="6.3" fill="#e6e6e6"/><path d="M9.6 11 L13.4 13.6 L11.8 8.6Z" fill="#e6e6e6"/><rect x="5.7" y="2.6" width="2.1" height="5.4" rx="0.6" fill="#3a3a3a"/><rect x="5.7" y="9" width="2.1" height="1.9" fill="#3a3a3a"/></svg>
<span class="t" style="left:17.6px;top:378.95px;color:#c2c2c2;font-size:6.95px;">[16:16:37] WwiseUnity: Plugins successfully activated for Profile in Editor.</span>
<span class="t" style="left:17.6px;top:386.95px;color:#c2c2c2;font-size:6.95px;">UnityEngine.Debug:Log (object)</span>
<div style="left:0px;top:397.38px;width:537px;height:20.78px;background:#3f3f3f;"></div>
<svg style="left:1.2px;top:401.48px;" width="15" height="15" viewBox="0 0 15 15"><circle cx="6.7" cy="6.5" r="6.3" fill="#e6e6e6"/><path d="M9.6 11 L13.4 13.6 L11.8 8.6Z" fill="#e6e6e6"/><rect x="5.7" y="2.6" width="2.1" height="5.4" rx="0.6" fill="#3a3a3a"/><rect x="5.7" y="9" width="2.1" height="1.9" fill="#3a3a3a"/></svg>
<span class="t" style="left:17.6px;top:399.78px;color:#c2c2c2;font-size:6.95px;">[16:16:38] WwiseUnity: Wwise(R) SDK Version 2024.1.8 Build 8893.</span>
<span class="t" style="left:17.6px;top:407.78px;color:#c2c2c2;font-size:6.95px;">UnityEngine.Debug:LogFormat (string,object[])</span>
<div style="left:0px;top:418.16px;width:537px;height:20.78px;background:#383838;"></div>
<svg style="left:1.2px;top:422.31px;" width="15" height="15" viewBox="0 0 15 15"><circle cx="6.7" cy="6.5" r="6.3" fill="#e6e6e6"/><path d="M9.6 11 L13.4 13.6 L11.8 8.6Z" fill="#e6e6e6"/><rect x="5.7" y="2.6" width="2.1" height="5.4" rx="0.6" fill="#3a3a3a"/><rect x="5.7" y="9" width="2.1" height="1.9" fill="#3a3a3a"/></svg>
<span class="t" style="left:17.6px;top:420.61px;color:#c2c2c2;font-size:6.95px;">[16:16:38] WwiseUnity: Setting Plugin DLL path to: E:\Unity\Cloud\Nova-TaptapGamejam\TaptapGamejam\Assets\Wwise\API\Runtime\Plugins\Windows\x86_64\DSP</span>
<span class="t" style="left:17.6px;top:428.61px;color:#c2c2c2;font-size:6.95px;">UnityEngine.Debug:Log (object)</span>
<div style="left:0px;top:438.94px;width:537px;height:20.78px;background:#3f3f3f;"></div>
<svg style="left:1.2px;top:443.14px;" width="15" height="15" viewBox="0 0 15 15"><circle cx="6.7" cy="6.5" r="6.3" fill="#e6e6e6"/><path d="M9.6 11 L13.4 13.6 L11.8 8.6Z" fill="#e6e6e6"/><rect x="5.7" y="2.6" width="2.1" height="5.4" rx="0.6" fill="#3a3a3a"/><rect x="5.7" y="9" width="2.1" height="1.9" fill="#3a3a3a"/></svg>
<span class="t" style="left:17.6px;top:441.44px;color:#c2c2c2;font-size:6.95px;">[16:16:38] WwiseUnity: Sound engine initialized successfully.</span>
<span class="t" style="left:17.6px;top:449.44px;color:#c2c2c2;font-size:6.95px;">UnityEngine.Debug:Log (object)</span>
<div style="left:0px;top:459.7px;width:537px;height:18px;background:#383838;"></div>
<div style="left:0px;top:477px;width:537px;height:0.8px;background:#262626;"></div>
<div style="left:0px;top:477.8px;width:537px;height:40px;background:#383838;"></div>
<div style="left:536.8px;top:19.5px;width:1.4px;height:498px;background:#151515;"></div>
<div style="left:538.2px;top:19.5px;width:181.8px;height:13px;background:#151515;"></div>
<div style="left:538.2px;top:19px;width:51.6px;height:13.7px;background:#3c3c3c;border-top:0.8px solid #50657c;"></div>
<svg style="left:544px;top:24.2px;" width="6" height="6" viewBox="0 0 6 6"><path d="M0 0.6 H5.4 M1 2.5 H5.4 M1 4.4 H5.4" stroke="#9a9a9a" stroke-width="0.75"/></svg>
<span class="t" style="left:552.2px;top:22px;color:#d0d0d0;font-size:6.9px;">Hierarchy</span>
<span class="t" style="left:596px;top:22px;color:#c0c0c0;font-size:6.9px;">Tile Palette</span>
<svg style="left:698.4px;top:22.7px;" width="6" height="7" viewBox="0 0 6 7"><path d="M1.6 3.6 V2.3 A1.5 1.5 0 0 1 4.6 2.3 V2.6" fill="none" stroke="#bdbdbd" stroke-width="0.8"/><rect x="0.5" y="3.6" width="4.2" height="3" fill="#bdbdbd"/></svg>
<svg style="left:710.4px;top:22.9px;" width="1.6" height="6.6" viewBox="0 0 1.6 6.6"><g fill="#c4c4c4"><rect x="0.2" y="0" width="1.2" height="1.3"/><rect x="0.2" y="2.6" width="1.2" height="1.3"/><rect x="0.2" y="5.2" width="1.2" height="1.3"/></g></svg>
<div style="left:538.2px;top:32.5px;width:181.8px;height:11.6px;background:#3c3c3c;"></div>
<svg style="left:541px;top:35px;" width="7" height="7" viewBox="0 0 7 7"><path d="M3.3 0.4 V6.2 M0.4 3.3 H6.2" stroke="#cfcfcf" stroke-width="1"/></svg>
<svg style="left:550px;top:37.4px;" width="4" height="2.6" viewBox="0 0 4 2.6"><path d="M0 0 L4 0 L2 2.6 Z" fill="#c4c4c4"/></svg>
<div style="left:561px;top:34.4px;width:145.4px;height:8.4px;background:#292929;border-radius:2px;"></div>
<svg style="left:564.4px;top:36.6px;" width="5" height="5" viewBox="0 0 5 5"><circle cx="1.8" cy="1.8" r="1.2" fill="none" stroke="#aaa" stroke-width="0.6"/><path d="M2.8 2.8 L4.2 4.2" stroke="#aaa" stroke-width="0.6"/></svg>
<span class="t" style="left:572.4px;top:33.6px;color:#6a6a6a;font-size:6.6px;">All</span>
<svg style="left:709.4px;top:34.6px;" width="8" height="8" viewBox="0 0 8 8"><rect x="1.6" y="0.4" width="5.6" height="5" fill="none" stroke="#c4c4c4" stroke-width="0.7"/><circle cx="3" cy="4.6" r="1.5" fill="#3c3c3c" stroke="#c4c4c4" stroke-width="0.7"/><path d="M1.8 5.8 L0.4 7.4" stroke="#c4c4c4" stroke-width="0.7"/></svg>
<div style="left:538.2px;top:44.1px;width:181.8px;height:280.6px;background:#383838;"></div>
<div style="left:538.2px;top:44.1px;width:18.2px;height:280.6px;background:#323232;"></div>
<div style="left:538.2px;top:52.55px;width:173.0px;height:9px;background:#2c629a;"></div>
<svg style="left:557.2px;top:46.1px;" width="3.4" height="4.4" viewBox="0 0 3.4 4.4"><path d="M0.3 0 L3.3 2.2 L0.3 4.4 Z" fill="#7a7a7a"/></svg>
<svg style="left:563.3px;top:43.9px;" width="8.8" height="8.8" viewBox="0 0 16 16"><circle cx="8" cy="8" r="7.2" fill="#e2e2e2"/><path d="M8 2.8 L12.4 5.4 V10.6 L8 13.2 L3.6 10.6 V5.4 Z" fill="none" stroke="#2a2a2a" stroke-width="1.5"/><path d="M3.6 5.4 L8 8 L12.4 5.4 M8 8 V13.2" stroke="#2a2a2a" stroke-width="1.5" fill="none"/></svg>
<span class="t" style="left:573.5px;top:43.5px;color:#d2d2d2;font-size:6.9px;font-weight:700;">Persistent</span>
<svg style="left:704px;top:45.0px;" width="1.6" height="6.6" viewBox="0 0 1.6 6.6"><g fill="#c4c4c4"><rect x="0.2" y="0" width="1.2" height="1.3"/><rect x="0.2" y="2.6" width="1.2" height="1.3"/><rect x="0.2" y="5.2" width="1.2" height="1.3"/></g></svg>
<svg style="left:556.5px;top:55.45px;" width="4.4" height="3.4" viewBox="0 0 4.4 3.4"><path d="M0 0.3 L4.4 0.3 L2.2 3.3 Z" fill="#7a7a7a"/></svg>
<svg style="left:563.3px;top:52.66px;" width="8.8" height="8.8" viewBox="0 0 16 16"><circle cx="8" cy="8" r="7.2" fill="#e2e2e2"/><path d="M8 2.8 L12.4 5.4 V10.6 L8 13.2 L3.6 10.6 V5.4 Z" fill="none" stroke="#2a2a2a" stroke-width="1.5"/><path d="M3.6 5.4 L8 8 L12.4 5.4 M8 8 V13.2" stroke="#2a2a2a" stroke-width="1.5" fill="none"/></svg>
<span class="t" style="left:573.5px;top:52.26px;color:#deebf7;font-size:6.9px;font-weight:700;">Level_1</span>
<svg style="left:704px;top:53.76px;" width="1.6" height="6.6" viewBox="0 0 1.6 6.6"><g fill="#e8e8e8"><rect x="0.2" y="0" width="1.2" height="1.3"/><rect x="0.2" y="2.6" width="1.2" height="1.3"/><rect x="0.2" y="5.2" width="1.2" height="1.3"/></g></svg>
<svg style="left:570.9px;top:61.41px;" width="8.8" height="8.8" viewBox="0 0 16 16"><g fill="none" stroke="#c8c8c8" stroke-width="1.25" stroke-linejoin="round" opacity="1"><path d="M8 1.3 L14 4.6 V11.4 L8 14.7 L2 11.4 V4.6 Z"/><path d="M2 4.6 L8 8 L14 4.6 M8 8 V14.7"/></g></svg>
<span class="t" style="left:581.1px;top:61.01px;color:#d2d2d2;font-size:6.9px;">WwiseGlobal</span>
<svg style="left:564.1px;top:72.97px;" width="4.4" height="3.4" viewBox="0 0 4.4 3.4"><path d="M0 0.3 L4.4 0.3 L2.2 3.3 Z" fill="#7a7a7a"/></svg>
<svg style="left:570.9px;top:70.16px;" width="8.8" height="8.8" viewBox="0 0 16 16"><g fill="none" stroke="#c8c8c8" stroke-width="1.25" stroke-linejoin="round" opacity="1"><path d="M8 1.3 L14 4.6 V11.4 L8 14.7 L2 11.4 V4.6 Z"/><path d="M2 4.6 L8 8 L14 4.6 M8 8 V14.7"/></g></svg>
<span class="t" style="left:581.1px;top:69.77px;color:#d2d2d2;font-size:6.9px;">Canvas</span>
<svg style="left:572.4px;top:81.12px;" width="3.4" height="4.4" viewBox="0 0 3.4 4.4"><path d="M0.3 0 L3.3 2.2 L0.3 4.4 Z" fill="#7a7a7a"/></svg>
<svg style="left:578.5px;top:78.92px;" width="8.8" height="8.8" viewBox="0 0 16 16"><g fill="none" stroke="#c8c8c8" stroke-width="1.25" stroke-linejoin="round" opacity="1"><path d="M8 1.3 L14 4.6 V11.4 L8 14.7 L2 11.4 V4.6 Z"/><path d="M2 4.6 L8 8 L14 4.6 M8 8 V14.7"/></g></svg>
<span class="t" style="left:588.7px;top:78.52px;color:#d2d2d2;font-size:6.9px;">MenuButtons</span>
<svg style="left:571.7px;top:90.48px;" width="4.4" height="3.4" viewBox="0 0 4.4 3.4"><path d="M0 0.3 L4.4 0.3 L2.2 3.3 Z" fill="#7a7a7a"/></svg>
<svg style="left:578.5px;top:87.67px;" width="8.8" height="8.8" viewBox="0 0 16 16"><g fill="none" stroke="#c8c8c8" stroke-width="1.25" stroke-linejoin="round" opacity="1"><path d="M8 1.3 L14 4.6 V11.4 L8 14.7 L2 11.4 V4.6 Z"/><path d="M2 4.6 L8 8 L14 4.6 M8 8 V14.7"/></g></svg>
<span class="t" style="left:588.7px;top:87.28px;color:#d2d2d2;font-size:6.9px;">ClueBoardPanel</span>
<svg style="left:579.3px;top:99.23px;" width="4.4" height="3.4" viewBox="0 0 4.4 3.4"><path d="M0 0.3 L4.4 0.3 L2.2 3.3 Z" fill="#7a7a7a"/></svg>
<svg style="left:586.1px;top:96.43px;" width="8.8" height="8.8" viewBox="0 0 16 16"><g fill="none" stroke="#c8c8c8" stroke-width="1.25" stroke-linejoin="round" opacity="1"><path d="M8 1.3 L14 4.6 V11.4 L8 14.7 L2 11.4 V4.6 Z"/><path d="M2 4.6 L8 8 L14 4.6 M8 8 V14.7"/></g></svg>
<span class="t" style="left:596.3px;top:96.03px;color:#d2d2d2;font-size:6.9px;">ClueBoxContainer</span>
<svg style="left:587.6px;top:107.39px;" width="3.4" height="4.4" viewBox="0 0 3.4 4.4"><path d="M0.3 0 L3.3 2.2 L0.3 4.4 Z" fill="#7a7a7a"/></svg>
<svg style="left:593.7px;top:105.19px;" width="8.8" height="8.8" viewBox="0 0 16 16"><g opacity="0.5"><path d="M8 0.8 L14.6 4.4 V11.6 L8 15.2 L1.4 11.6 V4.4 Z" fill="#6fb6ef"/><path d="M1.4 4.4 L8 8 L14.6 4.4 M8 8 V15.2" fill="none" stroke="#d8efff" stroke-width="1.3"/><path d="M8 0.8 L14.6 4.4 L8 8 L1.4 4.4 Z" fill="#a9d8fb"/></g></svg>
<span class="t" style="left:603.9px;top:104.79px;color:#4f5f8c;font-size:6.9px;">Flower</span>
<svg style="left:705.6px;top:107.19px;" width="3" height="5" viewBox="0 0 3 5"><path d="M0.4 0.4 L2.4 2.4 L0.4 4.4" fill="none" stroke="#8a8a8a" stroke-width="0.8"/></svg>
<svg style="left:587.6px;top:116.14px;" width="3.4" height="4.4" viewBox="0 0 3.4 4.4"><path d="M0.3 0 L3.3 2.2 L0.3 4.4 Z" fill="#7a7a7a"/></svg>
<svg style="left:593.7px;top:113.94px;" width="8.8" height="8.8" viewBox="0 0 16 16"><g opacity="0.5"><path d="M8 0.8 L14.6 4.4 V11.6 L8 15.2 L1.4 11.6 V4.4 Z" fill="#6fb6ef"/><path d="M1.4 4.4 L8 8 L14.6 4.4 M8 8 V15.2" fill="none" stroke="#d8efff" stroke-width="1.3"/><path d="M8 0.8 L14.6 4.4 L8 8 L1.4 4.4 Z" fill="#a9d8fb"/></g></svg>
<span class="t" style="left:603.9px;top:113.54px;color:#4f5f8c;font-size:6.9px;">Light</span>
<svg style="left:705.6px;top:115.94px;" width="3" height="5" viewBox="0 0 3 5"><path d="M0.4 0.4 L2.4 2.4 L0.4 4.4" fill="none" stroke="#8a8a8a" stroke-width="0.8"/></svg>
<svg style="left:587.6px;top:124.89px;" width="3.4" height="4.4" viewBox="0 0 3.4 4.4"><path d="M0.3 0 L3.3 2.2 L0.3 4.4 Z" fill="#7a7a7a"/></svg>
<svg style="left:593.7px;top:122.69px;" width="8.8" height="8.8" viewBox="0 0 16 16"><g opacity="0.5"><path d="M8 0.8 L14.6 4.4 V11.6 L8 15.2 L1.4 11.6 V4.4 Z" fill="#6fb6ef"/><path d="M1.4 4.4 L8 8 L14.6 4.4 M8 8 V15.2" fill="none" stroke="#d8efff" stroke-width="1.3"/><path d="M8 0.8 L14.6 4.4 L8 8 L1.4 4.4 Z" fill="#a9d8fb"/></g></svg>
<span class="t" style="left:603.9px;top:122.3px;color:#4f5f8c;font-size:6.9px;">WrongConnection</span>
<svg style="left:705.6px;top:124.69px;" width="3" height="5" viewBox="0 0 3 5"><path d="M0.4 0.4 L2.4 2.4 L0.4 4.4" fill="none" stroke="#8a8a8a" stroke-width="0.8"/></svg>
<svg style="left:587.6px;top:133.65px;" width="3.4" height="4.4" viewBox="0 0 3.4 4.4"><path d="M0.3 0 L3.3 2.2 L0.3 4.4 Z" fill="#7a7a7a"/></svg>
<svg style="left:593.7px;top:131.45px;" width="8.8" height="8.8" viewBox="0 0 16 16"><g opacity="0.5"><path d="M8 0.8 L14.6 4.4 V11.6 L8 15.2 L1.4 11.6 V4.4 Z" fill="#6fb6ef"/><path d="M1.4 4.4 L8 8 L14.6 4.4 M8 8 V15.2" fill="none" stroke="#d8efff" stroke-width="1.3"/><path d="M8 0.8 L14.6 4.4 L8 8 L1.4 4.4 Z" fill="#a9d8fb"/></g></svg>
<span class="t" style="left:603.9px;top:131.05px;color:#4f5f8c;font-size:6.9px;">TestInStage2</span>
<svg style="left:705.6px;top:133.45px;" width="3" height="5" viewBox="0 0 3 5"><path d="M0.4 0.4 L2.4 2.4 L0.4 4.4" fill="none" stroke="#8a8a8a" stroke-width="0.8"/></svg>
<svg style="left:580.0px;top:142.41px;" width="3.4" height="4.4" viewBox="0 0 3.4 4.4"><path d="M0.3 0 L3.3 2.2 L0.3 4.4 Z" fill="#7a7a7a"/></svg>
<svg style="left:586.1px;top:140.21px;" width="8.8" height="8.8" viewBox="0 0 16 16"><g fill="none" stroke="#c8c8c8" stroke-width="1.25" stroke-linejoin="round" opacity="0.5"><path d="M8 1.3 L14 4.6 V11.4 L8 14.7 L2 11.4 V4.6 Z"/><path d="M2 4.6 L8 8 L14 4.6 M8 8 V14.7"/></g></svg>
<span class="t" style="left:596.3px;top:139.81px;color:#6e6e6e;font-size:6.9px;">ClueBoard Button</span>
<svg style="left:572.4px;top:151.16px;" width="3.4" height="4.4" viewBox="0 0 3.4 4.4"><path d="M0.3 0 L3.3 2.2 L0.3 4.4 Z" fill="#7a7a7a"/></svg>
<svg style="left:578.5px;top:148.96px;" width="8.8" height="8.8" viewBox="0 0 16 16"><g fill="none" stroke="#c8c8c8" stroke-width="1.25" stroke-linejoin="round" opacity="1"><path d="M8 1.3 L14 4.6 V11.4 L8 14.7 L2 11.4 V4.6 Z"/><path d="M2 4.6 L8 8 L14 4.6 M8 8 V14.7"/></g></svg>
<span class="t" style="left:588.7px;top:148.56px;color:#d2d2d2;font-size:6.9px;">ContextMenu</span>
<svg style="left:572.4px;top:159.92px;" width="3.4" height="4.4" viewBox="0 0 3.4 4.4"><path d="M0.3 0 L3.3 2.2 L0.3 4.4 Z" fill="#7a7a7a"/></svg>
<svg style="left:578.5px;top:157.72px;" width="8.8" height="8.8" viewBox="0 0 16 16"><g fill="none" stroke="#c8c8c8" stroke-width="1.25" stroke-linejoin="round" opacity="1"><path d="M8 1.3 L14 4.6 V11.4 L8 14.7 L2 11.4 V4.6 Z"/><path d="M2 4.6 L8 8 L14 4.6 M8 8 V14.7"/></g></svg>
<span class="t" style="left:588.7px;top:157.31px;color:#d2d2d2;font-size:6.9px;">PropertyPanel</span>
<svg style="left:572.4px;top:168.67px;" width="3.4" height="4.4" viewBox="0 0 3.4 4.4"><path d="M0.3 0 L3.3 2.2 L0.3 4.4 Z" fill="#7a7a7a"/></svg>
<svg style="left:578.5px;top:166.47px;" width="8.8" height="8.8" viewBox="0 0 16 16"><g fill="none" stroke="#c8c8c8" stroke-width="1.25" stroke-linejoin="round" opacity="1"><path d="M8 1.3 L14 4.6 V11.4 L8 14.7 L2 11.4 V4.6 Z"/><path d="M2 4.6 L8 8 L14 4.6 M8 8 V14.7"/></g></svg>
<span class="t" style="left:588.7px;top:166.07px;color:#d2d2d2;font-size:6.9px;">ConnectionContainer</span>
<svg style="left:572.4px;top:177.43px;" width="3.4" height="4.4" viewBox="0 0 3.4 4.4"><path d="M0.3 0 L3.3 2.2 L0.3 4.4 Z" fill="#7a7a7a"/></svg>
<svg style="left:578.5px;top:175.22px;" width="8.8" height="8.8" viewBox="0 0 16 16"><g fill="none" stroke="#c8c8c8" stroke-width="1.25" stroke-linejoin="round" opacity="1"><path d="M8 1.3 L14 4.6 V11.4 L8 14.7 L2 11.4 V4.6 Z"/><path d="M2 4.6 L8 8 L14 4.6 M8 8 V14.7"/></g></svg>
<span class="t" style="left:588.7px;top:174.82px;color:#d2d2d2;font-size:6.9px;">Tips</span>
<svg style="left:564.8px;top:186.18px;" width="3.4" height="4.4" viewBox="0 0 3.4 4.4"><path d="M0.3 0 L3.3 2.2 L0.3 4.4 Z" fill="#7a7a7a"/></svg>
<svg style="left:570.9px;top:183.98px;" width="8.8" height="8.8" viewBox="0 0 16 16"><g fill="none" stroke="#c8c8c8" stroke-width="1.25" stroke-linejoin="round" opacity="1"><path d="M8 1.3 L14 4.6 V11.4 L8 14.7 L2 11.4 V4.6 Z"/><path d="M2 4.6 L8 8 L14 4.6 M8 8 V14.7"/></g></svg>
<span class="t" style="left:581.1px;top:183.58px;color:#d2d2d2;font-size:6.9px;">Blocking Canvas</span>
<svg style="left:564.8px;top:194.94px;" width="3.4" height="4.4" viewBox="0 0 3.4 4.4"><path d="M0.3 0 L3.3 2.2 L0.3 4.4 Z" fill="#7a7a7a"/></svg>
<svg style="left:570.9px;top:192.73px;" width="8.8" height="8.8" viewBox="0 0 16 16"><g fill="none" stroke="#c8c8c8" stroke-width="1.25" stroke-linejoin="round" opacity="0.5"><path d="M8 1.3 L14 4.6 V11.4 L8 14.7 L2 11.4 V4.6 Z"/><path d="M2 4.6 L8 8 L14 4.6 M8 8 V14.7"/></g></svg>
<span class="t" style="left:581.1px;top:192.33px;color:#6e6e6e;font-size:6.9px;">BugObjectCanvas</span>
<svg style="left:564.1px;top:204.29px;" width="4.4" height="3.4" viewBox="0 0 4.4 3.4"><path d="M0 0.3 L4.4 0.3 L2.2 3.3 Z" fill="#7a7a7a"/></svg>
<div style="left:571px;top:201.79px;width:131px;height:8.3px;background:#149bfb;"></div>
<span class="t" style="left:571px;width:131px;text-align:center;top:201.09px;color:#fff;font-size:6.3px;font-weight:700;">INTERACTABLE OBJECTS</span>
<svg style="left:571.7px;top:213.05px;" width="4.4" height="3.4" viewBox="0 0 4.4 3.4"><path d="M0 0.3 L4.4 0.3 L2.2 3.3 Z" fill="#7a7a7a"/></svg>
<svg style="left:578.5px;top:210.25px;" width="8.8" height="8.8" viewBox="0 0 16 16"><g fill="none" stroke="#c8c8c8" stroke-width="1.25" stroke-linejoin="round" opacity="1"><path d="M8 1.3 L14 4.6 V11.4 L8 14.7 L2 11.4 V4.6 Z"/><path d="M2 4.6 L8 8 L14 4.6 M8 8 V14.7"/></g></svg>
<span class="t" style="left:588.7px;top:209.85px;color:#d2d2d2;font-size:6.9px;">MainPlace_Stage1</span>
<svg style="left:586.1px;top:219.0px;" width="8.8" height="8.8" viewBox="0 0 16 16"><g fill="none" stroke="#c8c8c8" stroke-width="1.25" stroke-linejoin="round" opacity="1"><path d="M8 1.3 L14 4.6 V11.4 L8 14.7 L2 11.4 V4.6 Z"/><path d="M2 4.6 L8 8 L14 4.6 M8 8 V14.7"/></g></svg>
<span class="t" style="left:596.3px;top:218.6px;color:#d2d2d2;font-size:6.9px;">main BG</span>
<svg style="left:586.1px;top:227.76px;" width="8.8" height="8.8" viewBox="0 0 16 16"><g fill="none" stroke="#c8c8c8" stroke-width="1.25" stroke-linejoin="round" opacity="0.5"><path d="M8 1.3 L14 4.6 V11.4 L8 14.7 L2 11.4 V4.6 Z"/><path d="M2 4.6 L8 8 L14 4.6 M8 8 V14.7"/></g></svg>
<span class="t" style="left:596.3px;top:227.36px;color:#6e6e6e;font-size:6.9px;">Close-up To Desk</span>
<svg style="left:580.0px;top:238.71px;" width="3.4" height="4.4" viewBox="0 0 3.4 4.4"><path d="M0.3 0 L3.3 2.2 L0.3 4.4 Z" fill="#7a7a7a"/></svg>
<svg style="left:586.1px;top:236.51px;" width="8.8" height="8.8" viewBox="0 0 16 16"><g opacity="1"><path d="M8 0.8 L14.6 4.4 V11.6 L8 15.2 L1.4 11.6 V4.4 Z" fill="#6fb6ef"/><path d="M1.4 4.4 L8 8 L14.6 4.4 M8 8 V15.2" fill="none" stroke="#d8efff" stroke-width="1.3"/><path d="M8 0.8 L14.6 4.4 L8 8 L1.4 4.4 Z" fill="#a9d8fb"/></g></svg>
<span class="t" style="left:596.3px;top:236.11px;color:#7f9fd8;font-size:6.9px;">Flower</span>
<svg style="left:705.6px;top:238.51px;" width="3" height="5" viewBox="0 0 3 5"><path d="M0.4 0.4 L2.4 2.4 L0.4 4.4" fill="none" stroke="#8a8a8a" stroke-width="0.8"/></svg>
<svg style="left:580.0px;top:247.47px;" width="3.4" height="4.4" viewBox="0 0 3.4 4.4"><path d="M0.3 0 L3.3 2.2 L0.3 4.4 Z" fill="#7a7a7a"/></svg>
<svg style="left:586.1px;top:245.27px;" width="8.8" height="8.8" viewBox="0 0 16 16"><g opacity="1"><path d="M8 0.8 L14.6 4.4 V11.6 L8 15.2 L1.4 11.6 V4.4 Z" fill="#6fb6ef"/><path d="M1.4 4.4 L8 8 L14.6 4.4 M8 8 V15.2" fill="none" stroke="#d8efff" stroke-width="1.3"/><path d="M8 0.8 L14.6 4.4 L8 8 L1.4 4.4 Z" fill="#a9d8fb"/></g></svg>
<span class="t" style="left:596.3px;top:244.87px;color:#7f9fd8;font-size:6.9px;">Light</span>
<svg style="left:705.6px;top:247.27px;" width="3" height="5" viewBox="0 0 3 5"><path d="M0.4 0.4 L2.4 2.4 L0.4 4.4" fill="none" stroke="#8a8a8a" stroke-width="0.8"/></svg>
<svg style="left:580.0px;top:256.22px;" width="3.4" height="4.4" viewBox="0 0 3.4 4.4"><path d="M0.3 0 L3.3 2.2 L0.3 4.4 Z" fill="#7a7a7a"/></svg>
<svg style="left:586.1px;top:254.02px;" width="8.8" height="8.8" viewBox="0 0 16 16"><g opacity="1"><path d="M8 0.8 L14.6 4.4 V11.6 L8 15.2 L1.4 11.6 V4.4 Z" fill="#6fb6ef"/><path d="M1.4 4.4 L8 8 L14.6 4.4 M8 8 V15.2" fill="none" stroke="#d8efff" stroke-width="1.3"/><path d="M8 0.8 L14.6 4.4 L8 8 L1.4 4.4 Z" fill="#a9d8fb"/></g></svg>
<span class="t" style="left:596.3px;top:253.62px;color:#7f9fd8;font-size:6.9px;">WrongConnection</span>
<svg style="left:705.6px;top:256.02px;" width="3" height="5" viewBox="0 0 3 5"><path d="M0.4 0.4 L2.4 2.4 L0.4 4.4" fill="none" stroke="#8a8a8a" stroke-width="0.8"/></svg>
<div style="left:578.6px;top:263.07px;width:123.4px;height:8.3px;background:#9a2fe6;"></div>
<span class="t" style="left:578.6px;width:123.39999999999998px;text-align:center;top:262.38px;color:#fff;font-size:6.3px;font-weight:700;">MAINPLACE_STAGE2</span>
<svg style="left:572.4px;top:273.73px;" width="3.4" height="4.4" viewBox="0 0 3.4 4.4"><path d="M0.3 0 L3.3 2.2 L0.3 4.4 Z" fill="#7a7a7a"/></svg>
<svg style="left:578.5px;top:271.53px;" width="8.8" height="8.8" viewBox="0 0 16 16"><g opacity="1"><path d="M8 0.8 L14.6 4.4 V11.6 L8 15.2 L1.4 11.6 V4.4 Z" fill="#6fb6ef"/><path d="M1.4 4.4 L8 8 L14.6 4.4 M8 8 V15.2" fill="none" stroke="#d8efff" stroke-width="1.3"/><path d="M8 0.8 L14.6 4.4 L8 8 L1.4 4.4 Z" fill="#a9d8fb"/></g></svg>
<span class="t" style="left:588.7px;top:271.13px;color:#7f9fd8;font-size:6.9px;">TestInStage2</span>
<svg style="left:705.6px;top:273.53px;" width="3" height="5" viewBox="0 0 3 5"><path d="M0.4 0.4 L2.4 2.4 L0.4 4.4" fill="none" stroke="#8a8a8a" stroke-width="0.8"/></svg>
<svg style="left:564.8px;top:282.49px;" width="3.4" height="4.4" viewBox="0 0 3.4 4.4"><path d="M0.3 0 L3.3 2.2 L0.3 4.4 Z" fill="#7a7a7a"/></svg>
<svg style="left:570.9px;top:280.29px;" width="8.8" height="8.8" viewBox="0 0 16 16"><g fill="none" stroke="#c8c8c8" stroke-width="1.25" stroke-linejoin="round" opacity="0.5"><path d="M8 1.3 L14 4.6 V11.4 L8 14.7 L2 11.4 V4.6 Z"/><path d="M2 4.6 L8 8 L14 4.6 M8 8 V14.7"/></g></svg>
<span class="t" style="left:581.1px;top:279.88px;color:#6e6e6e;font-size:6.9px;">Desk</span>
<svg style="left:564.1px;top:291.84px;" width="4.4" height="3.4" viewBox="0 0 4.4 3.4"><path d="M0 0.3 L4.4 0.3 L2.2 3.3 Z" fill="#7a7a7a"/></svg>
<div style="left:571px;top:289.34px;width:131px;height:8.3px;background:#d2a010;"></div>
<span class="t" style="left:571px;width:131px;text-align:center;top:288.64px;color:#fff;font-size:6.3px;font-weight:700;">DIALOGUES</span>
<svg style="left:572.4px;top:300.0px;" width="3.4" height="4.4" viewBox="0 0 3.4 4.4"><path d="M0.3 0 L3.3 2.2 L0.3 4.4 Z" fill="#7a7a7a"/></svg>
<svg style="left:578.5px;top:297.8px;" width="8.8" height="8.8" viewBox="0 0 16 16"><g opacity="1"><path d="M8 0.8 L14.6 4.4 V11.6 L8 15.2 L1.4 11.6 V4.4 Z" fill="#6fb6ef"/><path d="M1.4 4.4 L8 8 L14.6 4.4 M8 8 V15.2" fill="none" stroke="#d8efff" stroke-width="1.3"/><path d="M8 0.8 L14.6 4.4 L8 8 L1.4 4.4 Z" fill="#a9d8fb"/></g></svg>
<span class="t" style="left:588.7px;top:297.39px;color:#7f9fd8;font-size:6.9px;">@DialogueUGUI</span>
<svg style="left:705.6px;top:299.8px;" width="3" height="5" viewBox="0 0 3 5"><path d="M0.4 0.4 L2.4 2.4 L0.4 4.4" fill="none" stroke="#8a8a8a" stroke-width="0.8"/></svg>
<svg style="left:578.5px;top:306.55px;" width="8.8" height="8.8" viewBox="0 0 16 16"><g fill="none" stroke="#c8c8c8" stroke-width="1.25" stroke-linejoin="round" opacity="1"><path d="M8 1.3 L14 4.6 V11.4 L8 14.7 L2 11.4 V4.6 Z"/><path d="M2 4.6 L8 8 L14 4.6 M8 8 V14.7"/></g></svg>
<span class="t" style="left:588.7px;top:306.15px;color:#d2d2d2;font-size:6.9px;">FirstFound Flower</span>
<svg style="left:578.5px;top:315.31px;" width="8.8" height="8.8" viewBox="0 0 16 16"><g fill="none" stroke="#c8c8c8" stroke-width="1.25" stroke-linejoin="round" opacity="1"><path d="M8 1.3 L14 4.6 V11.4 L8 14.7 L2 11.4 V4.6 Z"/><path d="M2 4.6 L8 8 L14 4.6 M8 8 V14.7"/></g></svg>
<span class="t" style="left:588.7px;top:314.91px;color:#d2d2d2;font-size:6.9px;">FirstFound Light</span>
<svg style="left:695.6px;top:307.95px;" width="7" height="6" viewBox="0 0 7 6"><g fill="#d0d0d0"><circle cx="3.2" cy="1.2" r="1.1"/><circle cx="1.2" cy="4.6" r="1.1"/><circle cx="5.2" cy="4.6" r="1.1"/></g></svg>
<svg style="left:695.6px;top:316.71px;" width="7" height="6" viewBox="0 0 7 6"><g fill="#d0d0d0"><circle cx="3.2" cy="1.2" r="1.1"/><circle cx="1.2" cy="4.6" r="1.1"/><circle cx="5.2" cy="4.6" r="1.1"/></g></svg>
<div style="left:555.3px;top:105.29px;width:1.4px;height:35.67px;background:#2b6ca4;"></div>
<div style="left:555.3px;top:139.85px;width:1.4px;height:3.6px;background:#2b6ca4;"></div>
<div style="left:555.3px;top:236.61px;width:1.4px;height:26.91px;background:#2b6ca4;"></div>
<div style="left:555.3px;top:271.63px;width:1.4px;height:9.4px;background:#2b6ca4;"></div>
<div style="left:555.3px;top:297.89px;width:1.4px;height:9.4px;background:#2b6ca4;"></div>
<div style="left:711.6px;top:44.1px;width:8.4px;height:280.6px;background:#353535;"></div>
<div style="left:712.8px;top:49px;width:4.6px;height:211.6px;background:#5e5e5e;border-radius:2.3px;"></div>
<svg style="left:713px;top:45.6px;" width="4" height="3" viewBox="0 0 4 3"><path d="M0 2.6 L2 0.2 L4 2.6Z" fill="#c4c4c4"/></svg>
<svg style="left:713px;top:318.6px;" width="4" height="3" viewBox="0 0 4 3"><path d="M0 0.2 L4 0.2 L2 2.6Z" fill="#c4c4c4"/></svg>
<div style="left:538.2px;top:324.6px;width:181.8px;height:1.2px;background:#151515;"></div>
<div style="left:538.2px;top:325.8px;width:181.8px;height:13.4px;background:#151515;"></div>
<div style="left:538.2px;top:325.8px;width:43.8px;height:13.6px;background:#3c3c3c;"></div>
<svg style="left:542.6px;top:328.6px;" width="7.8" height="7.8" viewBox="0 0 16 16"><path d="M1 2.6 H6.2 L7.5 4.3 H15 V13.4 H1 Z" fill="#c8c8c8"/></svg>
<span class="t" style="left:551.8px;top:327.8px;color:#d0d0d0;font-size:6.9px;">Project</span>
<svg style="left:698.4px;top:329.0px;" width="6" height="7" viewBox="0 0 6 7"><path d="M1.6 3.6 V2.3 A1.5 1.5 0 0 1 4.6 2.3 V2.6" fill="none" stroke="#bdbdbd" stroke-width="0.8"/><rect x="0.5" y="3.6" width="4.2" height="3" fill="#bdbdbd"/></svg>
<svg style="left:710.4px;top:329.3px;" width="1.6" height="6.6" viewBox="0 0 1.6 6.6"><g fill="#c4c4c4"><rect x="0.2" y="0" width="1.2" height="1.3"/><rect x="0.2" y="2.6" width="1.2" height="1.3"/><rect x="0.2" y="5.2" width="1.2" height="1.3"/></g></svg>
<div style="left:538.2px;top:339.2px;width:181.8px;height:11.2px;background:#3c3c3c;"></div>
<svg style="left:541.6px;top:341.6px;" width="7" height="7" viewBox="0 0 7 7"><path d="M3.3 0.4 V6.2 M0.4 3.3 H6.2" stroke="#cfcfcf" stroke-width="1"/></svg>
<svg style="left:550.6px;top:343.8px;" width="4" height="2.6" viewBox="0 0 4 2.6"><path d="M0 0 L4 0 L2 2.6 Z" fill="#c4c4c4"/></svg>
<div style="left:562.8px;top:340.6px;width:88px;height:8.4px;background:#292929;border-radius:2px;"></div>
<svg style="left:565.6px;top:342.8px;" width="5" height="5" viewBox="0 0 5 5"><circle cx="1.8" cy="1.8" r="1.2" fill="none" stroke="#aaa" stroke-width="0.6"/><path d="M2.8 2.8 L4.2 4.2" stroke="#aaa" stroke-width="0.6"/></svg>
<svg style="left:642.6px;top:341.2px;" width="8" height="8" viewBox="0 0 8 8"><rect x="1.6" y="0.4" width="5.2" height="4.8" fill="none" stroke="#a8a8a8" stroke-width="0.7"/><circle cx="2.8" cy="4.6" r="1.4" fill="#292929" stroke="#a8a8a8" stroke-width="0.7"/><path d="M1.8 5.6 L0.6 7" stroke="#a8a8a8" stroke-width="0.7"/></svg>
<div style="left:653.2px;top:339.6px;width:12.8px;height:10.4px;background:#474747;border-radius:1px;"></div>
<div style="left:667px;top:339.6px;width:13.4px;height:10.4px;background:#474747;border-radius:1px;"></div>
<div style="left:681.4px;top:339.6px;width:13.6px;height:10.4px;background:#474747;border-radius:1px;"></div>
<div style="left:696px;top:339.6px;width:22.4px;height:10.4px;background:#474747;border-radius:1px;"></div>
<svg style="left:656px;top:341px;" width="8" height="8" viewBox="0 0 8 8"><circle cx="3" cy="2" r="1.6" fill="#c4c4c4"/><path d="M0.4 6.8 Q3 2.6 5.6 6.8Z" fill="#c4c4c4"/><path d="M5.4 0.8 L7.4 0.8 L7.4 2.8Z" fill="#c4c4c4"/></svg>
<svg style="left:670.4px;top:341.4px;" width="8" height="8" viewBox="0 0 8 8"><path d="M3.6 0.6 H7 V4 L3.6 7.2 L0.4 4 Z" fill="#c4c4c4"/><circle cx="5.6" cy="2" r="0.7" fill="#3c3c3c"/></svg>
<svg style="left:684px;top:341px;" width="8" height="8" viewBox="0 0 8 8"><circle cx="3.8" cy="3.8" r="3.5" fill="#e8e8e8"/><rect x="3.2" y="1.6" width="1.2" height="3" fill="#444"/><rect x="3.2" y="5.2" width="1.2" height="1.1" fill="#444"/></svg>
<svg style="left:697.6px;top:341.6px;" width="9" height="7" viewBox="0 0 9 7"><path d="M0.4 3.2 Q3.8 -0.2 7.2 3.2 Q3.8 6.6 0.4 3.2Z" fill="#7c7c7c"/><path d="M0.8 6 L6.8 0.4" stroke="#3c3c3c" stroke-width="1"/></svg>
<span class="t" style="left:706.8px;top:340px;color:#c4c4c4;font-size:6.6px;">32</span>
<div style="left:538.2px;top:350.4px;width:181.8px;height:158.4px;background:#383838;"></div>
<svg style="left:579.2px;top:353.2px;" width="4.4" height="3.4" viewBox="0 0 4.4 3.4"><path d="M0 0.3 L4.4 0.3 L2.2 3.3 Z" fill="#7a7a7a"/></svg>
<svg style="left:586.1px;top:350.8px;" width="7.8" height="7.8" viewBox="0 0 16 16"><path d="M1 2.6 H6 L7.3 4.3 H13.5 V6.2 H4 L1 12 Z" fill="#c2c2c2"/><path d="M4.6 7.2 H15.6 L12.8 13.4 H1.6 Z" fill="#c2c2c2"/></svg>
<span class="t" style="left:594.7px;top:350.0px;color:#cecece;font-size:7.0px;">SpecialInTeaching</span>
<svg style="left:593.35px;top:359.16px;" width="8.8" height="8.8" viewBox="0 0 16 16"><path d="M2.6 0.8 H10.6 L13.6 3.8 V15.2 H2.6 Z" fill="#e9ece9"/><path d="M5.4 6 H11.2 M5 9.6 H10.8 M7 4.4 L6.2 11.4 M9.8 4.4 L9 11.4" stroke="#5d8f66" stroke-width="1" fill="none"/></svg>
<span class="t" style="left:602.25px;top:358.75px;color:#cecece;font-size:7.0px;">FlowerOutline</span>
<svg style="left:593.35px;top:367.91px;" width="8.8" height="8.8" viewBox="0 0 16 16"><path d="M2.6 0.8 H10.6 L13.6 3.8 V15.2 H2.6 Z" fill="#e9ece9"/><path d="M5.4 6 H11.2 M5 9.6 H10.8 M7 4.4 L6.2 11.4 M9.8 4.4 L9 11.4" stroke="#5d8f66" stroke-width="1" fill="none"/></svg>
<span class="t" style="left:602.25px;top:367.51px;color:#cecece;font-size:7.0px;">TeachingContradiction</span>
<svg style="left:579.2px;top:379.46px;" width="4.4" height="3.4" viewBox="0 0 4.4 3.4"><path d="M0 0.3 L4.4 0.3 L2.2 3.3 Z" fill="#7a7a7a"/></svg>
<svg style="left:586.1px;top:377.06px;" width="7.8" height="7.8" viewBox="0 0 16 16"><path d="M1 2.6 H6 L7.3 4.3 H13.5 V6.2 H4 L1 12 Z" fill="#c2c2c2"/><path d="M4.6 7.2 H15.6 L12.8 13.4 H1.6 Z" fill="#c2c2c2"/></svg>
<span class="t" style="left:594.7px;top:376.26px;color:#cecece;font-size:7.0px;">UI</span>
<svg style="left:593.35px;top:385.42px;" width="8.8" height="8.8" viewBox="0 0 16 16"><path d="M2.6 0.8 H10.6 L13.6 3.8 V15.2 H2.6 Z" fill="#e9ece9"/><path d="M5.4 6 H11.2 M5 9.6 H10.8 M7 4.4 L6.2 11.4 M9.8 4.4 L9 11.4" stroke="#5d8f66" stroke-width="1" fill="none"/></svg>
<span class="t" style="left:602.25px;top:385.02px;color:#cecece;font-size:7.0px;">ClueBoardManager</span>
<svg style="left:593.35px;top:394.18px;" width="8.8" height="8.8" viewBox="0 0 16 16"><path d="M2.6 0.8 H10.6 L13.6 3.8 V15.2 H2.6 Z" fill="#e9ece9"/><path d="M5.4 6 H11.2 M5 9.6 H10.8 M7 4.4 L6.2 11.4 M9.8 4.4 L9 11.4" stroke="#5d8f66" stroke-width="1" fill="none"/></svg>
<span class="t" style="left:602.25px;top:393.78px;color:#cecece;font-size:7.0px;">ClueBoxUI</span>
<svg style="left:593.35px;top:402.93px;" width="8.8" height="8.8" viewBox="0 0 16 16"><path d="M2.6 0.8 H10.6 L13.6 3.8 V15.2 H2.6 Z" fill="#e9ece9"/><path d="M5.4 6 H11.2 M5 9.6 H10.8 M7 4.4 L6.2 11.4 M9.8 4.4 L9 11.4" stroke="#5d8f66" stroke-width="1" fill="none"/></svg>
<span class="t" style="left:602.25px;top:402.53px;color:#cecece;font-size:7.0px;">ContextMenuManager</span>
<svg style="left:593.35px;top:411.69px;" width="8.8" height="8.8" viewBox="0 0 16 16"><path d="M2.6 0.8 H10.6 L13.6 3.8 V15.2 H2.6 Z" fill="#e9ece9"/><path d="M5.4 6 H11.2 M5 9.6 H10.8 M7 4.4 L6.2 11.4 M9.8 4.4 L9 11.4" stroke="#5d8f66" stroke-width="1" fill="none"/></svg>
<span class="t" style="left:602.25px;top:411.29px;color:#cecece;font-size:7.0px;">MenuButtonsManager</span>
<svg style="left:593.35px;top:420.44px;" width="8.8" height="8.8" viewBox="0 0 16 16"><path d="M2.6 0.8 H10.6 L13.6 3.8 V15.2 H2.6 Z" fill="#e9ece9"/><path d="M5.4 6 H11.2 M5 9.6 H10.8 M7 4.4 L6.2 11.4 M9.8 4.4 L9 11.4" stroke="#5d8f66" stroke-width="1" fill="none"/></svg>
<span class="t" style="left:602.25px;top:420.04px;color:#cecece;font-size:7.0px;">PropertyPanel</span>
<svg style="left:578.35px;top:429.6px;" width="7.8" height="7.8" viewBox="0 0 16 16"><path d="M1.2 3 H6 L7.3 4.6 H14.8 V13 H1.2 Z" fill="none" stroke="#c2c2c2" stroke-width="1.3"/></svg>
<span class="t" style="left:586.95px;top:428.8px;color:#cecece;font-size:7.0px;">Cursor</span>
<svg style="left:571.45px;top:440.75px;" width="4.4" height="3.4" viewBox="0 0 4.4 3.4"><path d="M0 0.3 L4.4 0.3 L2.2 3.3 Z" fill="#7a7a7a"/></svg>
<svg style="left:578.35px;top:438.35px;" width="7.8" height="7.8" viewBox="0 0 16 16"><path d="M1 2.6 H6 L7.3 4.3 H13.5 V6.2 H4 L1 12 Z" fill="#c2c2c2"/><path d="M4.6 7.2 H15.6 L12.8 13.4 H1.6 Z" fill="#c2c2c2"/></svg>
<span class="t" style="left:586.95px;top:437.55px;color:#cecece;font-size:7.0px;">Dialogue</span>
<svg style="left:585.6px;top:446.71px;" width="8.8" height="8.8" viewBox="0 0 16 16"><path d="M2.6 0.8 H10.6 L13.6 3.8 V15.2 H2.6 Z" fill="#e9ece9"/><path d="M5.4 6 H11.2 M5 9.6 H10.8 M7 4.4 L6.2 11.4 M9.8 4.4 L9 11.4" stroke="#5d8f66" stroke-width="1" fill="none"/></svg>
<span class="t" style="left:594.5px;top:446.31px;color:#cecece;font-size:7.0px;">StartDialogue</span>
<svg style="left:572.15px;top:457.66px;" width="3.4" height="4.4" viewBox="0 0 3.4 4.4"><path d="M0.3 0 L3.3 2.2 L0.3 4.4 Z" fill="#7a7a7a"/></svg>
<svg style="left:578.35px;top:455.86px;" width="7.8" height="7.8" viewBox="0 0 16 16"><path d="M1 2.6 H6.2 L7.5 4.3 H15 V13.4 H1 Z" fill="#c2c2c2"/></svg>
<span class="t" style="left:586.95px;top:455.06px;color:#cecece;font-size:7.0px;">Inventory</span>
<svg style="left:578.35px;top:464.62px;" width="7.8" height="7.8" viewBox="0 0 16 16"><path d="M1.2 3 H6 L7.3 4.6 H14.8 V13 H1.2 Z" fill="none" stroke="#c2c2c2" stroke-width="1.3"/></svg>
<span class="t" style="left:586.95px;top:463.81px;color:#cecece;font-size:7.0px;">Managers</span>
<svg style="left:572.15px;top:475.17px;" width="3.4" height="4.4" viewBox="0 0 3.4 4.4"><path d="M0.3 0 L3.3 2.2 L0.3 4.4 Z" fill="#7a7a7a"/></svg>
<svg style="left:578.35px;top:473.37px;" width="7.8" height="7.8" viewBox="0 0 16 16"><path d="M1 2.6 H6.2 L7.5 4.3 H15 V13.4 H1 Z" fill="#c2c2c2"/></svg>
<span class="t" style="left:586.95px;top:472.57px;color:#cecece;font-size:7.0px;">Systems</span>
<svg style="left:572.15px;top:483.93px;" width="3.4" height="4.4" viewBox="0 0 3.4 4.4"><path d="M0.3 0 L3.3 2.2 L0.3 4.4 Z" fill="#7a7a7a"/></svg>
<svg style="left:578.35px;top:482.12px;" width="7.8" height="7.8" viewBox="0 0 16 16"><path d="M1 2.6 H6.2 L7.5 4.3 H15 V13.4 H1 Z" fill="#c2c2c2"/></svg>
<span class="t" style="left:586.95px;top:481.32px;color:#cecece;font-size:7.0px;">Transition</span>
<svg style="left:572.15px;top:492.68px;" width="3.4" height="4.4" viewBox="0 0 3.4 4.4"><path d="M0.3 0 L3.3 2.2 L0.3 4.4 Z" fill="#7a7a7a"/></svg>
<svg style="left:578.35px;top:490.88px;" width="7.8" height="7.8" viewBox="0 0 16 16"><path d="M1 2.6 H6.2 L7.5 4.3 H15 V13.4 H1 Z" fill="#c2c2c2"/></svg>
<span class="t" style="left:586.95px;top:490.08px;color:#cecece;font-size:7.0px;">Utilities</span>
<svg style="left:564.4px;top:501.44px;" width="3.4" height="4.4" viewBox="0 0 3.4 4.4"><path d="M0.3 0 L3.3 2.2 L0.3 4.4 Z" fill="#7a7a7a"/></svg>
<svg style="left:570.6px;top:499.63px;" width="7.8" height="7.8" viewBox="0 0 16 16"><path d="M1 2.6 H6.2 L7.5 4.3 H15 V13.4 H1 Z" fill="#c2c2c2"/></svg>
<span class="t" style="left:579.2px;top:498.83px;color:#cecece;font-size:7.0px;">Settings</span>
<div style="left:711.6px;top:350.4px;width:8.4px;height:158.4px;background:#353535;"></div>
<div style="left:712.8px;top:403.6px;width:4.6px;height:37.2px;background:#5e5e5e;border-radius:2.3px;"></div>
<svg style="left:713px;top:352.6px;" width="4" height="3" viewBox="0 0 4 3"><path d="M0 2.6 L2 0.2 L4 2.6Z" fill="#c4c4c4"/></svg>
<svg style="left:713px;top:503.6px;" width="4" height="3" viewBox="0 0 4 3"><path d="M0 0.2 L4 0.2 L2 2.6Z" fill="#c4c4c4"/></svg>
<div style="left:538.2px;top:508.6px;width:181.8px;height:0.8px;background:#232323;"></div>
<div style="left:538.2px;top:509.4px;width:181.8px;height:8px;background:#3c3c3c;"></div>
</div></body></html>
